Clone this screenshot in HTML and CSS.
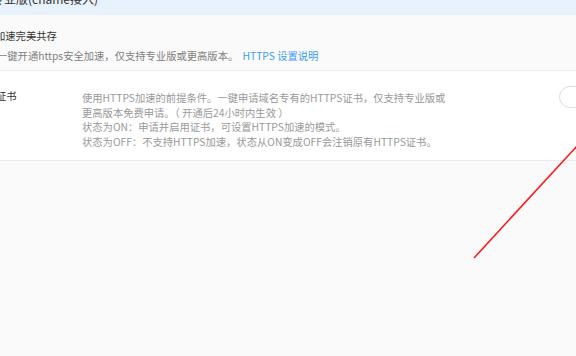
FILE: index.html
```html
<!DOCTYPE html>
<html lang="zh-CN">
<head>
    <meta charset="UTF-8">
    <title>HTTPS设置</title>
    <link rel="stylesheet" href="styles.css">
</head>
<body>
    <div class="tab-head"><span>专业版(cname接入)</span></div>

    <!-- HTTPS 说明 -->
    <div class="section">
        <div class="sec-title">加速完美共存</div>
        <div class="sec-desc">一键开通https安全加速，仅支持专业版或更高版本。 <a href="#" class="link">HTTPS 设置说明</a></div>
    </div>

    <!-- 证书 -->
    <div class="row">
        <div class="row-label">证书</div>
        <div class="row-desc">
            <p>使用HTTPS加速的前提条件。一键申请域名专有的HTTPS证书，仅支持专业版或<br>更高版本免费申请。（ 开通后24小时内生效 ）</p>
            <p>状态为ON：申请并启用证书，可设置HTTPS加速的模式。</p>
            <p>状态为OFF：不支持HTTPS加速，状态从ON变成OFF会注销原有HTTPS证书。</p>
        </div>
        <div class="switch"></div>
    </div>

    <svg class="mark" width="576" height="356" viewBox="0 0 576 356">
        <line x1="577" y1="146" x2="474" y2="258" stroke="#ff1a1a" stroke-width="1.6"/>
    </svg>
</body>
</html>
```

FILE: styles.css
```css
body {
    margin: 0;
    width: 576px;
    height: 356px;
    overflow: hidden;
    position: relative;
    background: #fafafa;
    font-family: "Microsoft YaHei", "Noto Sans CJK SC", sans-serif;
    font-size: 10.3px;
    color: #333;
}
.tab-head {
    height: 15px;
    overflow: hidden;
    background: #e8f2fc;
}
.tab-head span {
    display: block;
    margin-top: -9px;
    margin-left: -8px;
    line-height: 16px;
    font-size: 12px;
    color: #333;
}
.section {
    padding: 12px 0 5px 0;
    border-bottom: 1px solid #ececec;
}
.sec-title {
    margin-left: -5px;
    line-height: 18px;
    color: #333;
}
.sec-desc {
    margin-left: -3px;
    margin-top: 2px;
    line-height: 18px;
    color: #808080;
}
.link {
    margin-left: 2px;
    color: #3a9cf3;
    text-decoration: none;
}
.row {
    display: flex;
    align-items: flex-start;
    background: #fff;
    padding: 20px 0 11px 0;
    border-bottom: 1px solid #ececec;
}
.row-label {
    flex: none;
    width: 86px;
    margin-left: -4px;
    margin-top: -2px;
    line-height: 14.5px;
    color: #333;
}
.row-desc {
    flex: none;
    width: 460px;
    color: #999;
    line-height: 14.5px;
}
.row-desc p {
    margin: 0;
}
.switch {
    flex: none;
    margin-left: 17px;
    margin-top: -5px;
    width: 40px;
    height: 22px;
    box-sizing: border-box;
    border: 1px solid #ddd;
    border-radius: 12px;
    background: #fff;
}
.mark {
    position: absolute;
    left: 0;
    top: 0;
}
```
